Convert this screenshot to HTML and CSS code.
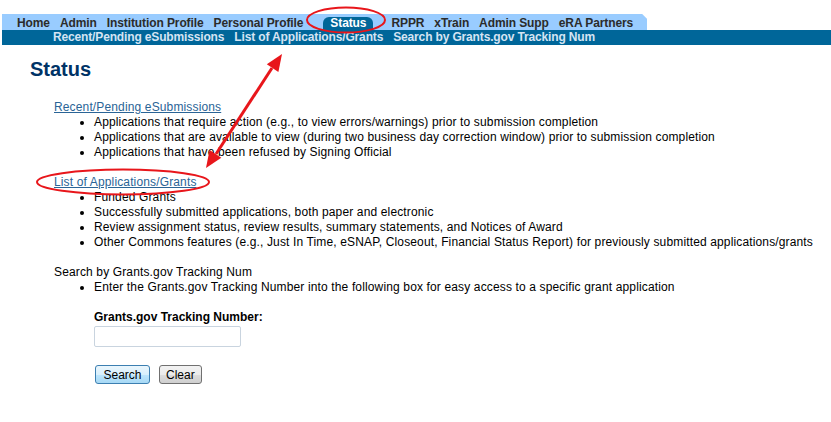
FILE: index.html
```html
<!DOCTYPE html>
<html lang="en">

<head>
  <meta charset="UTF-8">
  <title>Status</title>
  <link rel="stylesheet" href="styles.css">
</head>

<body>
  <div class="header">
    <ul class="main-nav">
      <li><a href="#">Home</a></li>
      <li><a href="#">Admin</a></li>
      <li><a href="#">Institution Profile</a></li>
      <li><a href="#">Personal Profile</a></li>
      <li class="current"><a href="#">Status</a></li>
      <li><a href="#">RPPR</a></li>
      <li><a href="#">xTrain</a></li>
      <li><a href="#">Admin Supp</a></li>
      <li><a href="#">eRA Partners</a></li>
    </ul>
    <ul class="sub-nav">
      <li><a href="#">Recent/Pending eSubmissions</a></li>
      <li><a href="#">List of Applications/Grants</a></li>
      <li><a href="#">Search by Grants.gov Tracking Num</a></li>
    </ul>
  </div>

  <div class="content">
    <h1>Status</h1>

    <div class="section">
      <a class="section-link" href="#">Recent/Pending eSubmissions</a>
      <ul>
        <li>Applications that require action (e.g., to view errors/warnings) prior to submission completion</li>
        <li>Applications that are available to view (during two business day correction window) prior to submission completion</li>
        <li>Applications that have been refused by Signing Official</li>
      </ul>
    </div>

    <div class="section">
      <a class="section-link" href="#">List of Applications/Grants</a>
      <ul>
        <li>Funded Grants</li>
        <li>Successfully submitted applications, both paper and electronic</li>
        <li>Review assignment status, review results, summary statements, and Notices of Award</li>
        <li>Other Commons features (e.g., Just In Time, eSNAP, Closeout, Financial Status Report) for previously submitted applications/grants</li>
      </ul>
    </div>

    <div class="section">
      <div>Search by Grants.gov Tracking Num</div>
      <ul>
        <li>Enter the Grants.gov Tracking Number into the following box for easy access to a specific grant application</li>
      </ul>

      <form class="search-form">
        <label class="search-label" for="trackingNum">Grants.gov Tracking Number:</label>
        <input type="text" id="trackingNum" class="search-input">
        <div class="search-buttons">
          <button type="button" class="btn btn-default">Search</button>
          <button type="button" class="btn">Clear</button>
        </div>
      </form>
    </div>
  </div>

  <!-- annotations drawn over the page -->
  <svg class="marks" width="831" height="422" viewBox="0 0 831 422">
    <ellipse cx="346" cy="20" rx="39" ry="12.5" fill="none" stroke="#e8161b" stroke-width="2" />
    <ellipse cx="123" cy="182" rx="86" ry="12.5" fill="none" stroke="#e8161b" stroke-width="2" />
    <line x1="272" y1="68" x2="216" y2="154" stroke="#e8161b" stroke-width="3" />
    <polygon points="282,54 278.4,72 266.8,64.3" fill="#e8161b" />
    <polygon points="206,168 221.3,157.7 209.6,150" fill="#e8161b" />
  </svg>
</body>

</html>
```

FILE: styles.css
```css
/* Base */
body {
  margin: 0;
  font-family: "Liberation Sans", Arial, sans-serif;
  font-size: 12px;
  color: #000;
  background: #fff;
  position: relative;
  min-height: 422px;
}

/* Top navigation */
.header {
  padding-top: 14px;
}

.main-nav {
  display: flex;
  align-items: flex-end;
  width: max-content;
  height: 16px;
  margin: 0 0 0 2px;
  padding: 0 9px 0 10px;
  list-style: none;
  background: #99ccff;
  clip-path: polygon(0 0, calc(100% - 5px) 0, 100% 5px, 100% 100%, 0 100%);
}

.main-nav a {
  display: block;
  padding: 2px 5px 0;
  line-height: 14px;
  font-weight: bold;
  color: #2b2b2b;
  text-decoration: none;
  letter-spacing: -0.1px;
}

.main-nav .current {
  margin: 0 13px 0 15px;
}

.main-nav .current a {
  padding: 0 7px 1px;
  line-height: 12px;
  background: #006699;
  color: #fff;
  border-radius: 6px 6px 0 0;
}

.sub-nav {
  display: flex;
  height: 15px;
  margin: 0 0 0 2px;
  padding: 0 0 0 46px;
  list-style: none;
  background: #006699;
}

.sub-nav a {
  display: block;
  padding: 0 5px;
  line-height: 15px;
  font-weight: bold;
  color: #d5e4f3;
  text-decoration: none;
  letter-spacing: -0.15px;
}

/* Page content */
.content {
  padding-left: 30px;
}

h1 {
  margin: 14px 0 21px;
  font-size: 20px;
  line-height: 20px;
  color: #003366;
}

.section {
  padding-left: 24px;
  margin-bottom: 15px;
  line-height: 15px;
  letter-spacing: 0.14px;
}

.section-link {
  color: #2a6496;
}

.section ul {
  margin: 0;
  padding-left: 40px;
}

/* Tracking number search */
.search-form {
  padding-left: 40px;
  margin-top: 15px;
  letter-spacing: 0;
}

.search-label {
  display: block;
  font-weight: bold;
  line-height: 15px;
}

.search-input {
  display: block;
  box-sizing: border-box;
  width: 147px;
  height: 21px;
  margin-top: 1px;
  border: 1px solid #c9d4df;
  border-radius: 2px;
  font-family: inherit;
}

.search-buttons {
  display: flex;
  gap: 9px;
  margin-top: 18px;
  padding-left: 1px;
}

.btn {
  box-sizing: border-box;
  height: 19px;
  padding: 0 6px;
  font-family: "Liberation Sans", Arial, sans-serif;
  font-size: 12px;
  color: #000;
  border: 1px solid #707070;
  border-radius: 3px;
  background: linear-gradient(#f2f2f2 0%, #ebebeb 50%, #dddddd 51%, #cfcfcf 100%);
}

.btn-default {
  width: 55px;
  border-color: #3c7fb1;
  background: linear-gradient(#eaf6fd 0%, #d9f0fc 50%, #bee6fd 51%, #a7d9f5 100%);
}

.marks {
  position: absolute;
  top: 0;
  left: 0;
  pointer-events: none;
}
```
